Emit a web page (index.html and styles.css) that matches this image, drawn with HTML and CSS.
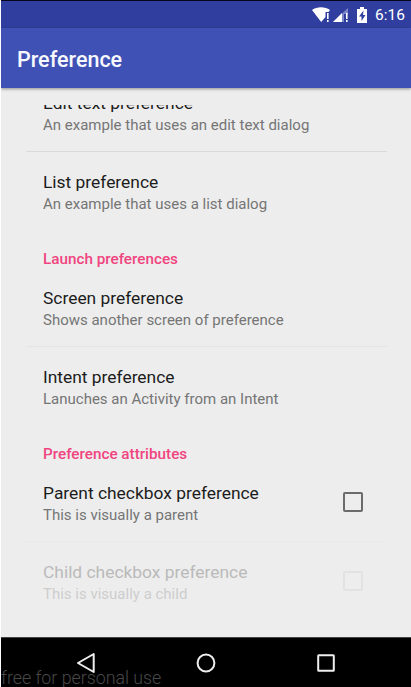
FILE: index.html
```html
<!DOCTYPE html>
<html lang="en">
<head>
<meta charset="utf-8">
<title>Preference</title>
<link rel="stylesheet" href="styles.css">
</head>
<body>
<div class="screen">
  <div class="status">
    <svg class="signals" width="58" height="18" viewBox="0 0 58 18">
      <path d="M0 4C5 .2 13 .2 18 4L16.5 6H13.5V11L9.2 16Z" fill="#fff"/>
      <path d="M15 7h1.6v6H15zM15 14h1.6v2H15z" fill="#fff"/>
      <path d="M21 16L36 2V8H32V16Z" fill="#7c86c9"/>
      <path d="M21 16L30 7V16Z" fill="#fff"/>
      <path d="M34 7h1.6v6H34zM34 14h1.6v2H34z" fill="#fff"/>
      <path d="M45 3h3V1h4v2h3v14H45Z" fill="#fff"/>
      <path d="M51.5 4.5L47 10.5h2.5v4.5L53.5 9H51Z" fill="#303f9f"/>
    </svg>
    <span class="clock">6:16</span>
  </div>
  <header class="appbar"><h1>Preference</h1></header>
  <main class="viewport">
    <div class="list">
      <div class="row divided"><div><div class="title">Edit text preference</div><div class="summary">An example that uses an edit text dialog</div></div></div>
      <div class="row lower"><div><div class="title">List preference</div><div class="summary">An example that uses a list dialog</div></div></div>
      <h2 class="category">Launch preferences</h2>
      <div class="row divided faint"><div><div class="title">Screen preference</div><div class="summary">Shows another screen of preference</div></div></div>
      <div class="row lower"><div><div class="title">Intent preference</div><div class="summary">Lanuches an Activity from an Intent</div></div></div>
      <h2 class="category">Preference attributes</h2>
      <div class="row divided fainter"><div><div class="title">Parent checkbox preference</div><div class="summary">This is visually a parent</div></div><span class="box"></span></div>
      <div class="row lower disabled"><div><div class="title">Child checkbox preference</div><div class="summary">This is visually a child</div></div><span class="box"></span></div>
    </div>
  </main>
  <nav class="navbar">
    <svg width="20" height="22" viewBox="0 0 20 22"><path d="M17.7 2V20L2 11Z"/></svg>
    <svg width="20" height="20" viewBox="0 0 20 20"><circle cx="10" cy="10" r="8.4"/></svg>
    <svg width="20" height="20" viewBox="0 0 20 20"><rect x="2.2" y="2.2" width="15.6" height="15.6" rx=".5"/></svg>
    <span class="watermark">free for personal use</span>
  </nav>
</div>
</body>
</html>
```
FILE: styles.css
```css
* { box-sizing: border-box; }
body { margin: 0; background: #fff; font-family: Roboto, sans-serif; }
.screen {
  display: flex; flex-direction: column;
  height: 687px; margin-left: 1px; overflow: hidden;
  background: #ededed;
}
.status {
  display: flex; align-items: center; flex: none;
  height: 28px; padding-left: 311px;
  border-top: 1px solid #05051c;
  background: #303f9f; color: #fff;
}
.clock { margin-left: 5px; font-size: 15.5px; font-weight: 400; line-height: 20px; }
.appbar {
  flex: none; height: 60px; padding-left: 16px;
  background: #3f51b5; color: #f8f9ff;
  box-shadow: 0 1px 3px rgba(0, 0, 0, .4);
}
.appbar h1 { margin: 0; font-size: 21.5px; font-weight: 500; line-height: 63px; }
.viewport { flex: none; height: 532px; margin-top: 17px; overflow: hidden; }
.list { margin-top: -31px; padding: 0 24px 0 25px; }
.row {
  display: flex; justify-content: space-between;
  height: 78px; padding: 18px 24px 0 17px;
  border-bottom: 1px solid transparent; white-space: nowrap;
}
.lower { padding-top: 19px; }
.divided { border-color: #dadada; }
.faint { border-color: #e5e5e5; }
.fainter { border-color: #e9e9e9; }
.title { font-size: 17.4px; line-height: 23px; color: #1c1c1c; }
.summary { font-size: 15px; line-height: 20px; color: #757575; }
.category {
  height: 39px; margin: 0; padding: 19px 0 0 17px;
  font-size: 15.25px; font-weight: 500; line-height: 20px; color: #f0447f;
}
.box { width: 20px; height: 20px; margin-top: 10px; border: 2px solid #6b6b6b; border-radius: 2px; }
.disabled .title { color: #bababa; }
.disabled .summary { color: #cdcdcd; }
.disabled .box { border-color: #e2e2e2; }
.navbar {
  position: relative; display: flex; align-items: center; gap: 100px;
  flex: none; height: 50px; padding: 1px 0 0 75px;
  border-top: 1px solid #444; background: #000;
}
.navbar svg { fill: none; stroke: #eee; stroke-width: 2; stroke-linejoin: round; }
.watermark {
  position: absolute; left: 0; bottom: 0;
  font-size: 17.8px; font-weight: 300; line-height: 19px; color: #484848; white-space: nowrap;
}
```
